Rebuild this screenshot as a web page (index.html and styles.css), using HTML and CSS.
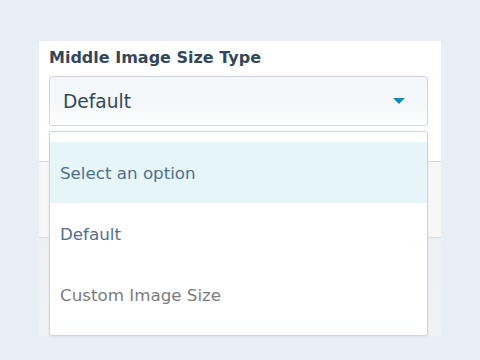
FILE: index.html
```html
<!DOCTYPE html>
<html lang="en">
<head>
    <meta charset="UTF-8">
    <meta name="viewport" content="width=device-width, initial-scale=1.0">
    <title>Middle Image Size Type</title>
    <link rel="stylesheet" href="styles.css">
</head>
<body>
    <div class="panel">
        <div class="field">
            <label class="field-label">Middle Image Size Type</label>
            <div class="select">
                <span class="select-value">Default</span>
                <svg class="caret" width="12" height="6" viewBox="0 0 12 6"><path d="M0 0h12L6 6z" fill="#0091ae"/></svg>
            </div>

            <ul class="dropdown">
                <li class="option active">Select an option</li>
                <li class="option">Default</li>
                <li class="option muted">Custom Image Size</li>
            </ul>
        </div>
        <div class="section section-light"></div>
        <div class="section section-grey"></div>
    </div>
</body>
</html>
```

FILE: styles.css
```css
* {
    margin: 0;
    padding: 0;
    box-sizing: border-box;
}

body {
    font-family: 'DejaVu Sans', 'Open Sans', sans-serif;
    background: #eaeff7;
    width: 480px;
    height: 360px;
    overflow: hidden;
}

.panel {
    margin: 41px 0 0 39px;
    width: 402px;
}

.field {
    position: relative;
    background: white;
    height: 121px;
    padding: 5px 13px 0 10px;
    border-bottom: 1px solid #d3dbe5;
}

.field-label {
    display: block;
    font-size: 16px;
    line-height: 24px;
    font-weight: 700;
    color: #33475b;
    margin-bottom: 6px;
}

.select {
    display: flex;
    align-items: center;
    justify-content: space-between;
    height: 50px;
    padding: 0 22px 0 13px;
    border: 1px solid #cbd6e2;
    border-radius: 3px;
    background: linear-gradient(180deg, #f5f8fa 0%, #f5f8fa 60%, #ffffff 100%);
    font-size: 18.6px;
    color: #33475b;
}

.caret {
    display: block;
}

.section {
    border-bottom: 1px solid #d3dbe5;
}

.section-light {
    height: 76px;
    background: #f7f7f8;
}

.section-grey {
    height: 98px;
    border-bottom: none;
    background: linear-gradient(180deg, #eef1f4 0%, #f0f2f5 100%);
}

.dropdown {
    position: absolute;
    left: 10px;
    top: 90px;
    width: 379px;
    height: 205px;
    list-style: none;
    padding: 10px 0 11px;
    background: white;
    border: 1px solid #cbd6e2;
    border-radius: 3px;
    box-shadow: 0 1px 3px rgba(45, 62, 80, 0.08);
    z-index: 2;
}

.option {
    height: 61px;
    display: flex;
    align-items: center;
    padding-left: 10px;
    font-size: 16.7px;
    color: #516f90;
}

.option.active {
    background: #e5f5f8;
}

.option.muted {
    color: #7c7c7c;
}
```
